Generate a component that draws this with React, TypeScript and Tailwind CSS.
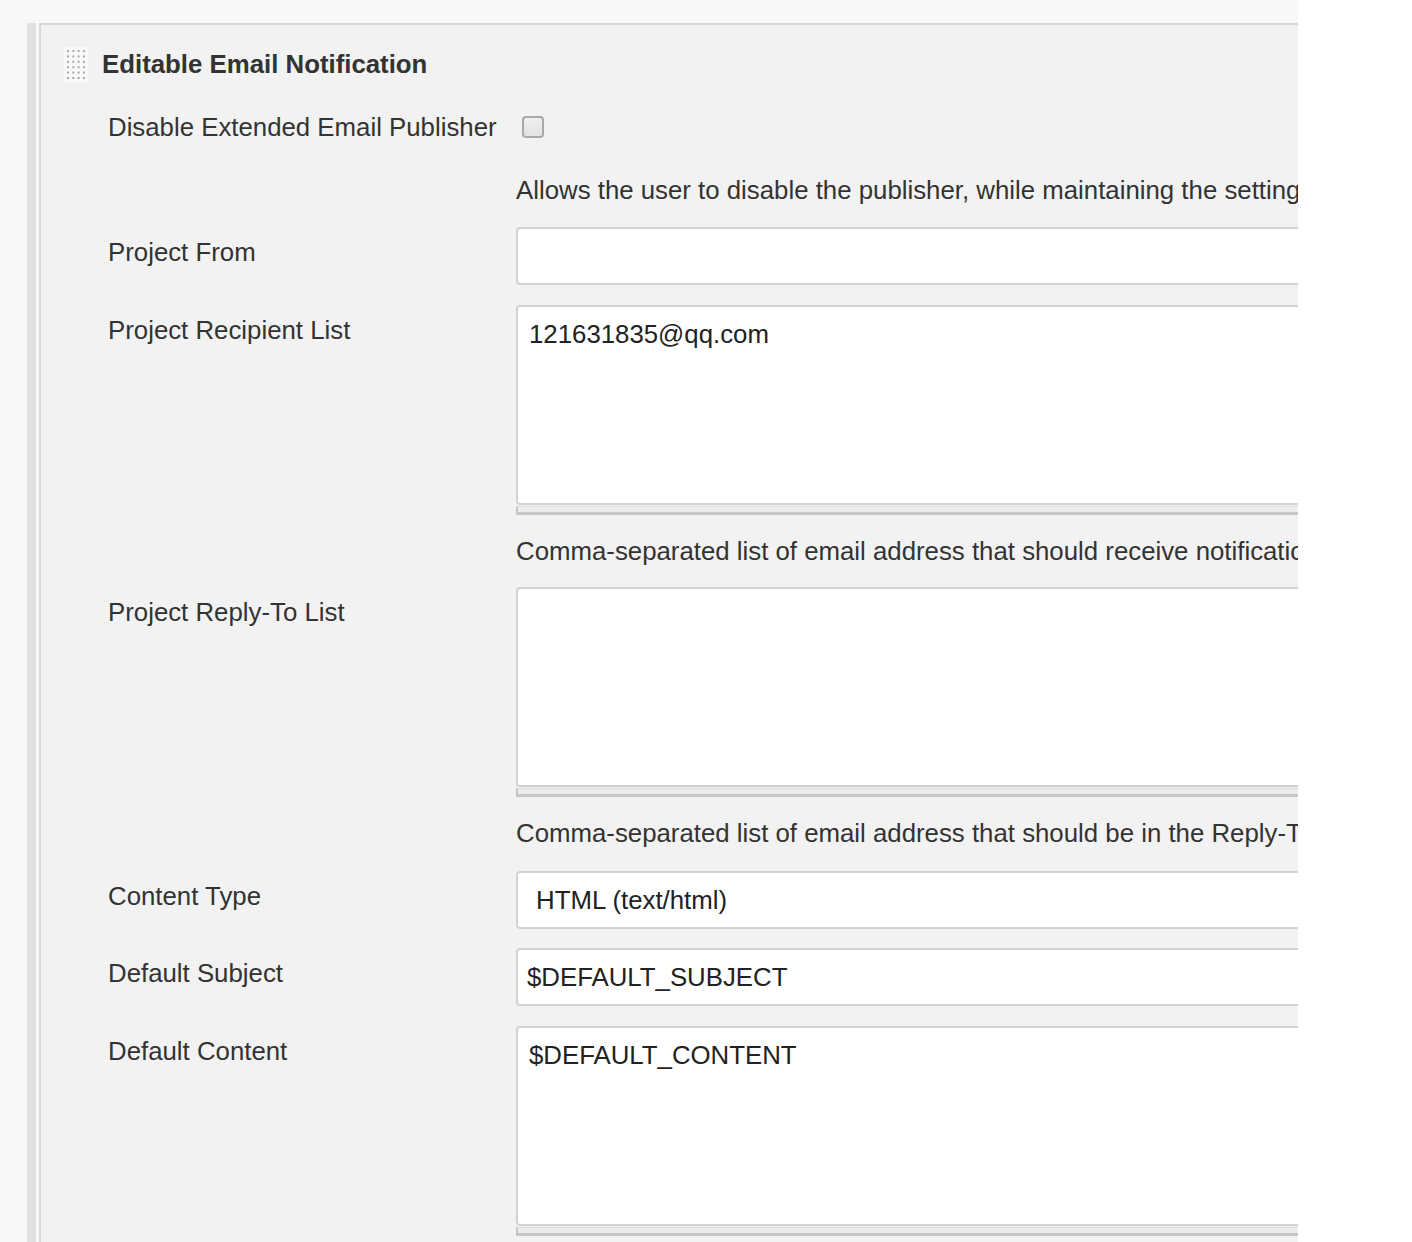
import type { ReactNode } from 'react';

function Grip() {
  const dots = [];
  for (let r = 0; r < 6; r++) {
    for (let c = 0; c < 4; c++) {
      dots.push(<rect key={`${r}-${c}`} x={3 + c * 5.3} y={3 + r * 5.4} width="2" height="2" fill="#a9a9a9" />);
    }
  }
  return (
    <svg width="24" height="35" viewBox="0 0 24 35" className="shrink-0">
      <rect width="24" height="35" fill="#f9f9f9" />
      {dots}
    </svg>
  );
}

function Row({ label, children, className }: { label: string; children: ReactNode; className?: string }) {
  return (
    <div className={`flex pl-[67px] ${className ?? ''}`}>
      <div className="w-[408px] shrink-0 pt-[10px] leading-[30px] text-[#333]">{label}</div>
      <div className="w-[1000px] shrink-0">{children}</div>
    </div>
  );
}

function Help({ text, className }: { text: string; className?: string }) {
  return (
    <div className={`pl-[475px] leading-[30px] whitespace-nowrap text-[#333] ${className ?? ''}`}>{text}</div>
  );
}

function TextArea({ value }: { value?: string }) {
  return (
    <div>
      <div className="h-[200px] rounded-[4px] border-2 border-[#d2d2d2] bg-white pl-[11px] pt-[12px] leading-[30px] text-[#222]">
        {value}
      </div>
      <div className="mt-[1px] h-[9px] border-b-[3px] border-l-2 border-t border-b-[#c6c6c6] border-l-[#c6c6c6] border-t-[#dedede] bg-[#ececec]" />
    </div>
  );
}

function Input({ value, pad = 'pl-[9px]' }: { value?: string; pad?: string }) {
  return (
    <div className={`flex h-[58px] items-center rounded-[4px] border-2 border-[#d2d2d2] bg-white ${pad} text-[#222]`}>
      {value}
    </div>
  );
}

export default function App() {
  return (
    <div className="min-h-[1242px] bg-white font-['Liberation_Sans',Arial,sans-serif] text-[25.8px]">
      <div className="flex h-[1242px] w-[1298px] overflow-hidden bg-[#f8f8f8] pl-[27px] pt-[23px]">
        {/* side bar */}
        <div className="w-[9px] shrink-0 bg-[#e0e0e0]" />
        <div className="ml-[3px] w-[1600px] shrink-0 border-l-2 border-t-2 border-[#d9d9d9] bg-[#f2f2f2]">
          {/* header */}
          <div className="mt-[22px] flex h-[35px] items-center gap-[14px] pl-[23px]">
            <Grip />
            <span className="font-bold text-[#333]">Editable Email Notification</span>
          </div>

          <div className="mt-[30px] flex h-[30px] items-center pl-[67px]">
            <span className="w-[414px] shrink-0 leading-[30px] text-[#333]">Disable Extended Email Publisher</span>
            <div className="h-[22px] w-[22px] rounded-[4px] border-2 border-[#a9a9a9] bg-gradient-to-b from-[#f0f0f0] to-[#e2e2e2]" />
          </div>
          <Help className="mt-[33px]" text="Allows the user to disable the publisher, while maintaining the settings" />

          <Row className="mt-[22px]" label="Project From">
            <Input />
          </Row>

          <Row className="mt-[20px]" label="Project Recipient List">
            <TextArea value="121631835@qq.com" />
          </Row>
          <Help
            className="mt-[21px]"
            text="Comma-separated list of email address that should receive notifications for this project."
          />

          <Row className="mt-[21px]" label="Project Reply-To List">
            <TextArea />
          </Row>
          <Help
            className="mt-[21px]"
            text="Comma-separated list of email address that should be in the Reply-To header for this project."
          />

          <Row className="mt-[23px]" label="Content Type">
            <Input value="HTML (text/html)" pad="pl-[18px]" />
          </Row>

          <Row className="mt-[19px]" label="Default Subject">
            <Input value="$DEFAULT_SUBJECT" />
          </Row>

          <Row className="mt-[20px]" label="Default Content">
            <TextArea value="$DEFAULT_CONTENT" />
          </Row>
        </div>
      </div>
    </div>
  );
}
